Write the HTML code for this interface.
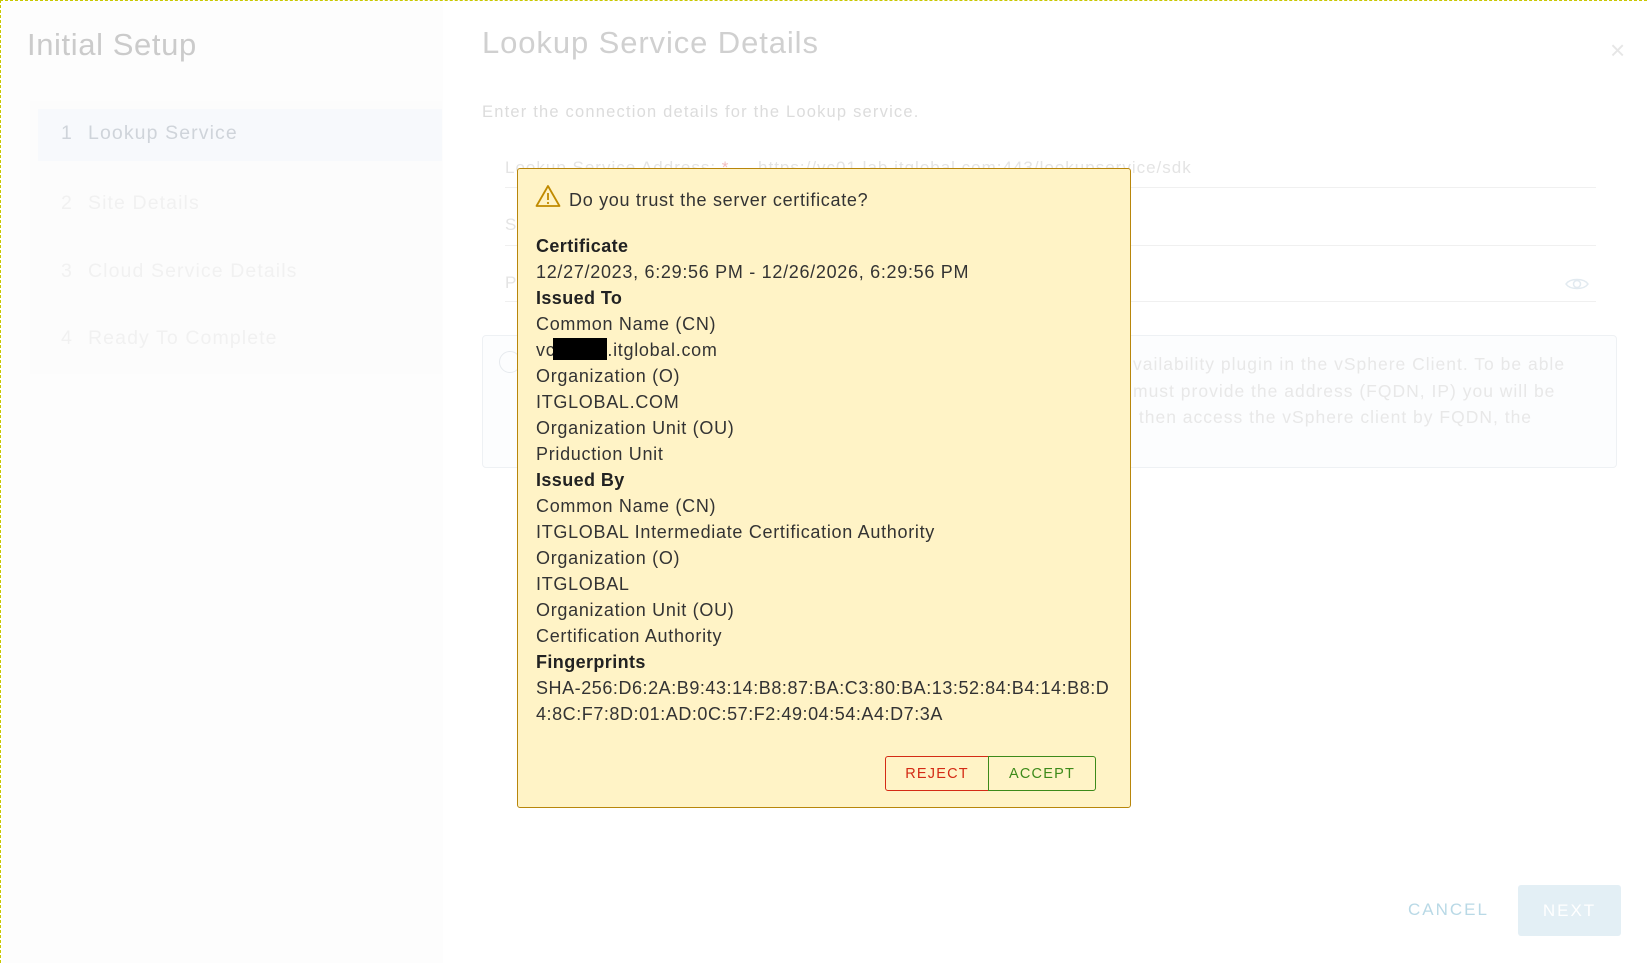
<!DOCTYPE html>
<html><head><meta charset="utf-8"><style>
*{box-sizing:border-box;margin:0;padding:0}
html,body{width:1647px;height:963px;overflow:hidden;background:#fff;font-family:"Liberation Sans",sans-serif}
body{position:relative;border-top:1px dashed #c8c800;border-left:1px dashed #c8c800}
.a{position:absolute;white-space:nowrap}
.left{position:absolute;left:1px;top:1px;width:441px;height:962px;background:#fdfdfd}
.g{color:#d2d2d2}
.line{position:absolute;height:1px;background:#f0f0f0}
.dlg{position:absolute;left:516px;top:167px;width:614px;height:640px;background:#fff3c6;border:1px solid #b8860b;border-radius:3px}
.dlg .t{position:absolute;left:18px;font-size:18px;letter-spacing:0.7px;color:#333;line-height:26px;white-space:nowrap}
.dlg b{font-weight:bold;color:#222;letter-spacing:0.4px}
.fp{letter-spacing:0.55px}
.btn{position:absolute;top:587px;height:35px;font-size:14.5px;letter-spacing:1.2px;display:flex;align-items:center;justify-content:center;background:#fff3c6}
.st{position:absolute;font-size:19.5px;letter-spacing:1.1px;white-space:nowrap}
.st span{position:absolute;left:27px}
</style></head><body>
<div class="left"></div>
<div class="a g" style="left:26px;top:26px;font-size:31px;letter-spacing:0.6px;color:#cbcbcb">Initial Setup</div>
<div class="a" style="left:29px;top:100px;width:412px;height:273px;background:#fcfcfc"></div>
<div class="a" style="left:37px;top:108px;width:404px;height:52px;background:#f7f9fc"></div>
<div class="st" style="left:60px;top:121px;color:#cfd4da">1<span>Lookup Service</span></div>
<div class="st" style="left:60px;top:191px;color:#f1f1f1">2<span>Site Details</span></div>
<div class="st" style="left:60px;top:259px;color:#f1f1f1">3<span>Cloud Service Details</span></div>
<div class="st" style="left:60px;top:326px;color:#f1f1f1">4<span>Ready To Complete</span></div>

<div class="a" style="left:481px;top:24px;font-size:31px;letter-spacing:0.9px;color:#d0d0d0">Lookup Service Details</div>
<div class="a" style="left:481px;top:102px;font-size:16.5px;letter-spacing:1.2px;color:#dcdcdc">Enter the connection details for the Lookup service.</div>
<div class="a" style="left:504px;top:157px;font-size:17px;letter-spacing:1px;color:#e4e4e4">Lookup Service Address: <span style="color:#f3c0c0">*</span>&nbsp;&nbsp;&nbsp;&nbsp;&nbsp;https://vc01.lab.itglobal.com:443/lookupservice/sdk</div>
<div class="line" style="left:504px;top:186px;width:1091px"></div>
<div class="a" style="left:504px;top:214px;font-size:17px;color:#e4e4e4">S</div>
<div class="line" style="left:504px;top:244px;width:1091px"></div>
<div class="a" style="left:504px;top:272px;font-size:17px;color:#e4e4e4">P</div>
<div class="line" style="left:504px;top:300px;width:1091px"></div>
<svg class="a" style="left:1564px;top:275px" width="24" height="16" viewBox="0 0 24 16"><path d="M1 8C5 2 19 2 23 8C19 14 5 14 1 8Z" fill="none" stroke="#e2eaf0" stroke-width="1.5"/><circle cx="12" cy="8" r="3.5" fill="none" stroke="#e2eaf0" stroke-width="1.5"/></svg>
<div class="a" style="left:481px;top:334px;width:1135px;height:133px;border:1px solid #eef1f4;border-radius:4px;background:#fcfdfe"></div>
<div class="a" style="left:498px;top:350px;width:22px;height:22px;border:1.5px solid #e6eaee;border-radius:50%"></div>
<div class="a" style="left:1132px;top:350px;font-size:17.5px;letter-spacing:1px;color:#e8e8e8;line-height:26.5px">vailability plugin in the vSphere Client. To be able<br>must provide the address (FQDN, IP) you will be<br>&nbsp;then access the vSphere client by FQDN, the</div>
<div class="a" style="left:1609px;top:34px;font-size:26px;color:#e6e6e6">×</div>
<div class="a" style="left:1407px;top:899px;font-size:17px;letter-spacing:2px;color:#b9d9e6">CANCEL</div>
<div class="a" style="left:1517px;top:884px;width:103px;height:51px;background:#e3eff5;border-radius:3px;color:#fff;font-size:17px;letter-spacing:2px;display:flex;align-items:center;justify-content:center">NEXT</div>

<div class="dlg">
<svg class="a" style="left:17px;top:15px" width="26" height="24" viewBox="0 0 26 24"><path d="M13 2L24.5 22H1.5Z" fill="none" stroke="#c08a00" stroke-width="1.8" stroke-linejoin="round"/><line x1="13" y1="9" x2="13" y2="16" stroke="#c08a00" stroke-width="1.8"/><circle cx="13" cy="19" r="1.1" fill="#c08a00"/></svg>
<div class="t" style="left:51px;top:18px">Do you trust the server certificate?</div>
<div class="t" style="top:64px"><b>Certificate</b><br>12/27/2023, 6:29:56 PM - 12/26/2026, 6:29:56 PM<br><b>Issued To</b><br>Common Name (CN)<br>vc<span style="display:inline-block;width:54px;height:22px;background:#000;vertical-align:-4px;margin-left:-2px"></span>.itglobal.com<br>Organization (O)<br>ITGLOBAL.COM<br>Organization Unit (OU)<br>Priduction Unit<br><b>Issued By</b><br>Common Name (CN)<br>ITGLOBAL Intermediate Certification Authority<br>Organization (O)<br>ITGLOBAL<br>Organization Unit (OU)<br>Certification Authority<br><b>Fingerprints</b><br><span class="fp">SHA-256:D6:2A:B9:43:14:B8:87:BA:C3:80:BA:13:52:84:B4:14:B8:D</span><br><span class="fp">4:8C:F7:8D:01:AD:0C:57:F2:49:04:54:A4:D7:3A</span></div>
<div class="btn" style="left:367px;width:104px;border:1px solid #d42b15;border-radius:3px 0 0 3px;color:#d42b15">REJECT</div>
<div class="btn" style="left:470px;width:108px;border:1px solid #3d8a1a;border-radius:0 3px 3px 0;color:#3d8a1a">ACCEPT</div>
</div>
</body></html>
